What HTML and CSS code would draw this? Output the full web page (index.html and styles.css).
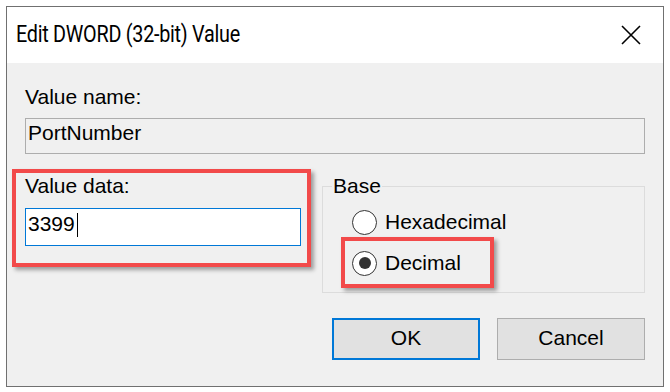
FILE: index.html
```html
<!DOCTYPE html>
<html>
<head>
    <title>Edit DWORD (32-bit) Value</title>
    <link rel="stylesheet" href="styles.css">
</head>
<body>
    <div class="dialog">
        <div class="titlebar">
            <span class="title">Edit DWORD (32-bit) Value</span>
            <svg class="close" width="20" height="20" viewBox="0 0 20 20">
                <path d="M1 1 L19 19 M19 1 L1 19" stroke="#000" stroke-width="1.6" fill="none"/>
            </svg>
        </div>

        <div class="content">
            <div class="label">Value name:</div>
            <div class="field readonly">PortNumber</div>

            <div class="row">
                <div class="data-col marked">
                    <div class="label">Value data:</div>
                    <div class="field edit">3399<span class="caret"></span></div>
                </div>

                <fieldset class="base">
                    <legend>Base</legend>
                    <div class="radio">
                        <span class="dot"></span>
                        <span>Hexadecimal</span>
                    </div>
                    <div class="radio checked marked">
                        <span class="dot"></span>
                        <span>Decimal</span>
                    </div>
                </fieldset>
            </div>

            <div class="buttons">
                <button class="default">OK</button>
                <button>Cancel</button>
            </div>
        </div>
    </div>
</body>
</html>
```

FILE: styles.css
```css
body {
    margin: 0;
    padding: 6px;
    background: #fff;
    font-family: "Liberation Sans", Arial, sans-serif;
    font-size: 21px;
    color: #000;
}
.dialog {
    width: 656px;
    height: 379px;
    border: 1px solid #707070;
    display: flex;
    flex-direction: column;
}
.titlebar {
    height: 56px;
    background: #fff;
    display: flex;
    align-items: center;
    justify-content: space-between;
    padding: 0 22px 0 9px;
}
.title {
    display: inline-block;
    font-family: Roboto, "Open Sans", sans-serif;
    font-size: 23px;
    letter-spacing: -0.3px;
    line-height: 56px;
    transform: scaleX(0.86);
    transform-origin: left center;
}
.close {
    display: block;
}
.content {
    flex: 1;
    background: #f0f0f0;
    padding: 22px 18px 0 18px;
}
.label {
    line-height: 24px;
}
.field {
    box-sizing: border-box;
    line-height: 24px;
    padding: 2px 2px;
}
.readonly {
    margin-top: 9px;
    height: 36px;
    border: 1px solid #adadad;
}
.row {
    display: flex;
    align-items: flex-start;
    gap: 21px;
    margin-top: 20px;
}
.data-col {
    width: 276px;
    position: relative;
}
.edit {
    margin-top: 10px;
    height: 38px;
    padding-top: 3px;
    background: #fff;
    border: 1px solid #0078d7;
}
.caret {
    display: inline-block;
    width: 1px;
    height: 24px;
    background: #000;
    margin-left: 2px;
    vertical-align: -6px;
}
.marked::after {
    content: "";
    position: absolute;
    border: 4px solid #f24a4a;
    box-shadow: 3px 3px 4px rgba(0, 0, 0, 0.35);
    pointer-events: none;
}
.data-col.marked::after {
    top: -5px;
    left: -13px;
    right: -10px;
    bottom: -21px;
}
.base {
    flex: 1;
    margin: 0;
    height: 119px;
    box-sizing: border-box;
    border: 1px solid #dcdcdc;
    padding: 11px 0 0 9px;
}
.base legend {
    padding: 0 1px;
    line-height: 24px;
}
.radio {
    display: flex;
    align-items: center;
    gap: 8px;
    height: 26px;
    line-height: 26px;
    margin-left: 20px;
    width: fit-content;
    position: relative;
}
.radio + .radio {
    margin-top: 15px;
}
.dot {
    box-sizing: border-box;
    width: 25px;
    height: 25px;
    border: 1.5px solid #333;
    border-radius: 50%;
    background: #fff;
    display: flex;
    align-items: center;
    justify-content: center;
}
.checked .dot::before {
    content: "";
    width: 12px;
    height: 12px;
    border-radius: 50%;
    background: #333;
}
.radio.marked::after {
    top: -13px;
    left: -11px;
    right: -33px;
    bottom: -12px;
}
.buttons {
    display: flex;
    justify-content: flex-end;
    gap: 17px;
    margin-top: 25px;
}
button {
    box-sizing: border-box;
    width: 148px;
    height: 42px;
    background: #e1e1e1;
    border: 1px solid #adadad;
    font-family: "Liberation Sans", Arial, sans-serif;
    font-size: 21px;
    color: #000;
    padding: 0 0 2px 0;
}
button.default {
    border: 2px solid #0078d7;
}
```
